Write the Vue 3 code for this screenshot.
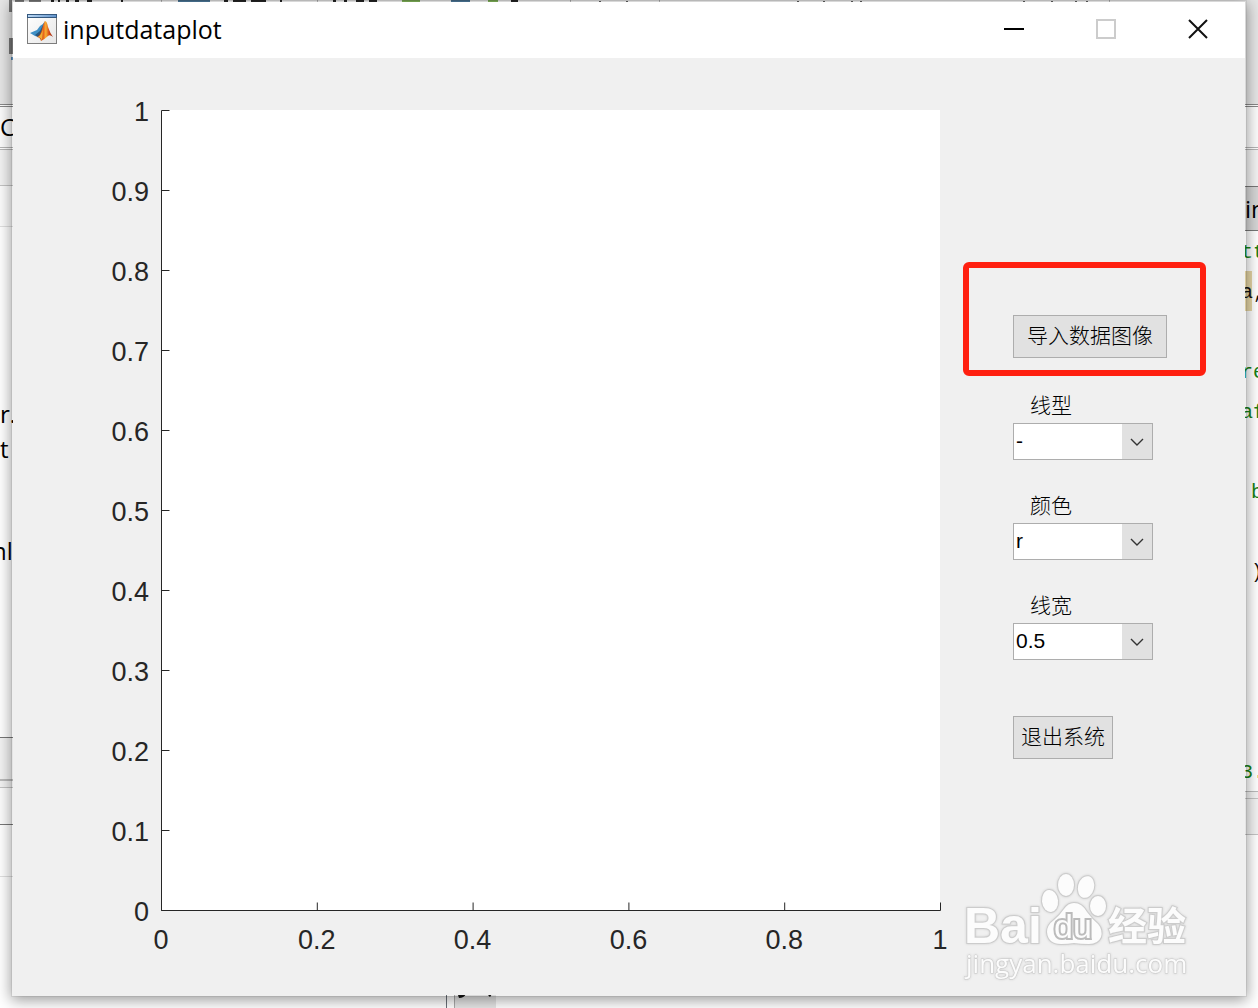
<script setup>
import { ref } from 'vue'

const lineStyle = ref('-')
const lineColor = ref('r')
const lineWidth = ref('0.5')

const yTicks = [0, 10, 20, 30, 40, 50, 60, 70, 80, 90, 100]
const xTicks = [0, 20, 40, 60, 80, 100]

// Slices of the editor that stay visible on either side of the dialog
const leftRows = [
  { h: 104, kind: 'ribbon' },
  { h: 3, kind: 'double' },
  { h: 40, kind: 'pale', text: 'C', tone: 'ui' },
  { h: 3, kind: 'double soft' },
  { h: 36, kind: 'tint line' },
  { h: 41, kind: 'pale line faint' },
  { h: 170, kind: 'paper' },
  { h: 34, kind: 'paper', text: 'r.', tone: 'ui' },
  { h: 36, kind: 'paper', text: 't', tone: 'ui' },
  { h: 66, kind: 'paper' },
  { h: 36, kind: 'paper', text: 'nl', tone: 'ui shifted' },
  { h: 169, kind: 'paper line strong' },
  { h: 41, kind: 'tint' },
  { h: 2, kind: 'bar' },
  { h: 7, kind: 'tint line' },
  { h: 37, kind: 'pale line strong' },
  { h: 52, kind: 'paper line faint' },
  { h: 131, kind: 'paper' }
]
const rightRows = [
  { h: 104, kind: 'ribbon' },
  { h: 3, kind: 'double' },
  { h: 40, kind: 'pale' },
  { h: 3, kind: 'double soft' },
  { h: 37, kind: 'tint line strong' },
  { h: 44, kind: 'tab line strong', text: 'in', tone: 'ui' },
  { h: 40, kind: 'paper', text: 'tt', tone: 'code comment' },
  { h: 40, kind: 'paper marked', text: 'a,', tone: 'code' },
  { h: 40, kind: 'paper' },
  { h: 40, kind: 'paper', text: 're', tone: 'code comment' },
  { h: 40, kind: 'paper', text: 'af', tone: 'code comment' },
  { h: 40, kind: 'paper' },
  { h: 40, kind: 'paper', text: 'b', tone: 'code comment inset' },
  { h: 40, kind: 'paper' },
  { h: 40, kind: 'paper', text: ')', tone: 'code inset' },
  { h: 160, kind: 'paper' },
  { h: 40, kind: 'paper', text: '3.', tone: 'code comment' },
  { h: 1, kind: 'bar' },
  { h: 7, kind: 'tint line' },
  { h: 36, kind: 'tint line' },
  { h: 173, kind: 'paper' }
]
</script>

<template>
  <div class="desktop">
    <div class="backdrop" aria-hidden="true">
      <div class="strip">
        <div v-for="(row, i) in leftRows" :key="i" class="row" :class="row.kind" :style="{ height: row.h + 'px' }">
          <span v-if="row.text" :class="row.tone">{{ row.text }}</span>
        </div>
      </div>
      <div class="behind">
        <svg class="ribbon-icons" width="1100" height="60">
          <g fill="#777">
            <path d="M-4 0h3v12h-3zM-4 38h4v16h-4zM2 0h9v2H2zM16 0h12v2H16z" />
          </g>
          <path d="M-2 57h3v3h-3z" fill="#5d8cb5" />
          <path d="M38 0h3v2h-3zM45 0h2v2h-2zM53 0h3v2h-3zM62 0h4v2h-4zM74 0h5v2h-5zM108 0h2v2h-2zM211 0h4v2h-4zM220 0h13v2h-13zM238 0h15v2h-15zM267 0h2v2h-2zM320 0h3v2h-3zM331 0h3v2h-3zM343 0h8v2h-8zM356 0h8v2h-8zM498 0h7v2h-7z" fill="#222" />
          <path d="M165 0h32v2h-32zM438 0h19v2h-19z" fill="#48708f" />
          <path d="M389 0h18v2h-18zM475 0h10v2h-10z" fill="#77a652" />
          <path d="M148 0h1v2h-1zM304 0h1v2h-1zM557 0h1v2h-1zM646 0h1v2h-1zM1096 0h1v2h-1z" fill="#aaa" />
          <path d="M586 1h2v1h-2zM613 1h2v1h-2zM784 1h2v1h-2zM810 1h2v1h-2zM838 1h2v1h-2zM847 1h2v1h-2zM1010 1h2v1h-2zM1038 1h2v1h-2zM1062 1h2v1h-2zM1073 1h2v1h-2z" fill="#555" />
        </svg>
        <svg class="tool-icon" width="50" height="14">
          <path d="M8 0h42v14H8z" fill="#e6e6e6" />
          <path d="M0 0h1v14H0z" fill="#6a7078" />
          <path d="M8 0h1v14H8z" fill="#aaa" />
          <path d="M12 1q5-1 8-1-2 4-7 4zM41 0h5l-2 3z" fill="#111" />
        </svg>
      </div>
      <div class="strip">
        <div v-for="(row, i) in rightRows" :key="i" class="row" :class="row.kind" :style="{ height: row.h + 'px' }">
          <span v-if="row.text" :class="row.tone">{{ row.text }}</span>
        </div>
      </div>
    </div>

    <main class="window">
      <header class="titlebar">
        <svg class="app-icon" viewBox="0 0 31 31" width="31" height="31">
          <defs>
            <linearGradient id="bar" x1="0" x2="1"><stop offset="0" stop-color="#b9d6f2" /><stop offset="1" stop-color="#6495cc" /></linearGradient>
            <linearGradient id="face" x1="0" y1="0" x2="1" y2="1"><stop offset="0" stop-color="#fff" /><stop offset="1" stop-color="#e6e6e6" /></linearGradient>
            <linearGradient id="peak" x1="0" x2="1"><stop offset="0" stop-color="#8c2414" /><stop offset=".4" stop-color="#e8641c" /><stop offset=".55" stop-color="#f7b035" /><stop offset=".75" stop-color="#d84a16" /><stop offset="1" stop-color="#8c2010" /></linearGradient>
          </defs>
          <rect x=".5" y=".5" width="29" height="29" fill="url(#face)" stroke="#7d7d7d" />
          <path d="M0 0h30v4H0z" fill="#34587f" />
          <path d="M1 1h28v2H1z" fill="url(#bar)" />
          <path d="M3 19l7-3 3-4q3-1 5-5l-3 10-4 6-3-1z" fill="#3f8fc5" />
          <path d="M8 21l5-4 4-8-2 10-4 4z" fill="#29577c" />
          <path d="M18 7q2 0 3 6 2 6 5 10-3-3-5-1-3 3-7 5-1-4-4-4 4-3 5-8 2-7 3-8z" fill="url(#peak)" />
          <path d="M10 23q4-1 6-8l-1 12q-1-4-5-4z" fill="#f2ac35" />
        </svg>
        <h1>inputdataplot</h1>
        <div class="controls">
          <button type="button" aria-label="Minimize"><svg width="20" height="20"><path d="M0 10h20" stroke="#000" stroke-width="2" /></svg></button>
          <button type="button" aria-label="Maximize" disabled><svg width="20" height="20"><path d="M1 1h18v18H1z" fill="none" stroke="#ccc" stroke-width="2" /></svg></button>
          <button type="button" aria-label="Close"><svg width="20" height="20"><path d="M1 1l18 18M19 1L1 19" stroke="#111" stroke-width="2" /></svg></button>
        </div>
      </header>

      <div class="content">
        <svg class="axes" role="img" aria-label="Empty axes">
          <rect width="100%" height="100%" fill="#fff" />
          <g class="rules" transform="translate(.5 .5)">
            <line x1="0" y1="0" x2="0" y2="100%" />
            <line x1="0" y1="100%" x2="100%" y2="100%" />
            <line v-for="t in yTicks" :key="'y' + t" x1="0" x2="8" :y1="100 - t + '%'" :y2="100 - t + '%'" />
            <svg v-for="t in xTicks" :key="'x' + t" :x="t + '%'" y="100%" overflow="visible"><line x1="0" x2="0" y1="-8" y2="0" /></svg>
          </g>
          <text v-for="t in yTicks" :key="'yl' + t" x="-12" :y="100 - t + '%'" dy="11" text-anchor="end">{{ t / 100 }}</text>
          <text v-for="t in xTicks" :key="'xl' + t" :x="t + '%'" y="100%" dy="39" text-anchor="middle">{{ t / 100 }}</text>
        </svg>

        <form class="panel" @submit.prevent>
          <div class="import">
            <button type="button" class="push wide">导入数据图像</button>
            <span class="highlight"></span>
          </div>
          <div class="fields">
            <div class="field">
              <label for="style">线型</label>
              <div class="combo">
                <select id="style" v-model="lineStyle"><option>-</option><option>--</option><option>:</option><option>-.</option></select>
                <svg width="14" height="8"><path d="M1 1l6 6 6-6" /></svg>
              </div>
            </div>
            <div class="field">
              <label for="color">颜色</label>
              <div class="combo">
                <select id="color" v-model="lineColor"><option>r</option><option>g</option><option>b</option><option>k</option></select>
                <svg width="14" height="8"><path d="M1 1l6 6 6-6" /></svg>
              </div>
            </div>
            <div class="field">
              <label for="width">线宽</label>
              <div class="combo">
                <select id="width" v-model="lineWidth"><option>0.5</option><option>1</option><option>1.5</option><option>2</option></select>
                <svg width="14" height="8"><path d="M1 1l6 6 6-6" /></svg>
              </div>
            </div>
          </div>
          <button type="button" class="push">退出系统</button>
        </form>
      </div>

      <svg class="watermark" width="228" height="112" role="img" aria-label="Baidu">
        <g class="mark">
          <text class="latin" x="0" y="70">Bai</text>
          <ellipse cx="86" cy="28" rx="8" ry="11" transform="rotate(-6 86 28)" />
          <ellipse cx="102" cy="12" rx="8" ry="11" />
          <ellipse cx="122" cy="14" rx="8" ry="11" transform="rotate(14 122 14)" />
          <ellipse cx="134" cy="33" rx="8" ry="10" />
          <path d="M110 30q8 0 13 9 5 7 11 12 5 6 3 13-3 7-12 7-8 0-15-1-6 1-13 1-13 0-14-12 0-7 7-12 6-5 10-11 4-6 10-6z" />
          <text class="paw" x="90" y="65">du</text>
          <text class="hanzi" x="144" y="67">经验</text>
        </g>
        <text class="url" x="2" y="100">jingyan.baidu.com</text>
      </svg>
    </main>
  </div>
</template>

<style>
body {
  margin: 0;
}
</style>

<style scoped>
.desktop {
  position: relative;
  display: flex;
  flex-direction: column;
  box-sizing: border-box;
  min-height: 100vh;
  padding: 0 11px 11px;
  overflow: hidden;
  background: #fff;
}
.backdrop {
  position: absolute;
  inset: 0;
  display: flex;
  overflow: hidden;
}
.strip {
  flex: none;
  width: 13px;
  overflow: hidden;
}
.behind {
  position: relative;
  flex: 1;
  display: flex;
  flex-direction: column;
  justify-content: space-between;
  background: linear-gradient(#e6e6e6 104px, #fff 104px);
}
.ribbon-icons {
  overflow: visible;
}
.tool-icon {
  margin-left: 433px;
}
.row {
  box-sizing: border-box;
  display: flex;
  align-items: center;
  white-space: nowrap;
}
.ribbon { background: #e6e6e6; }
.paper { background: #fff; }
.pale { background: #fcfcfc; }
.tint { background: #f3f3f3; }
.tab { background: #d6d6d6; }
.bar { background: #bbb; }
.double {
  border: solid #888;
  border-width: 1px 0;
  background: #fff;
}
.double.soft { border-color: #b5b5b5; }
.line { border-bottom: 1px solid #c4c4c4; }
.line.faint { border-color: #e0e0e0; }
.line.strong { border-color: #777; }
.marked { background: linear-gradient(90deg, #e6d6a6 7px, #fff 7px); }
.ui {
  font: 24px/32px "Open Sans", "Noto Sans", sans-serif;
  color: #000;
}
.shifted { margin-left: -8px; }
.code {
  padding-top: 4px;
  font: 20px/36px "Liberation Mono", monospace;
  margin-left: -4px;
  color: #111;
}
.comment { color: #168016; }
.inset { margin-left: 6px; }

.window {
  position: relative;
  flex: 1;
  display: flex;
  flex-direction: column;
  border: 2px solid rgba(0, 0, 0, 0.06);
  background: #f0f0f0;
  background-clip: padding-box;
  box-shadow: 0 3px 14px rgba(0, 0, 0, 0.4);
}
.titlebar {
  display: flex;
  align-items: center;
  box-sizing: border-box;
  height: 56px;
  padding: 0 1px 2px 14px;
  background: #fff;
}
.app-icon { margin-right: 5px; }
h1 {
  flex: 1;
  margin: 0;
  font: 25px/32px "Open Sans", "Noto Sans", sans-serif;
  color: #000;
}
.controls { display: flex; }
.controls button {
  display: flex;
  align-items: center;
  justify-content: center;
  width: 92px;
  height: 54px;
  padding: 0;
  border: 0;
  background: none;
}
.content {
  flex: 1;
  display: flex;
  padding: 52px 0 85px 148px;
}
.axes {
  flex: 1;
  min-width: 0;
  min-height: 400px;
  overflow: visible;
}
.rules line {
  stroke: #262626;
  stroke-width: 1px;
}
.axes text {
  font: 27px "Liberation Sans", Arial, sans-serif;
  fill: #262626;
}
.panel {
  display: flex;
  flex-direction: column;
  align-items: flex-start;
  box-sizing: border-box;
  width: 305px;
  padding: 205px 0 0 73px;
}
.push {
  box-sizing: border-box;
  height: 43px;
  padding: 0 7px 6px;
  border: 1px solid #adadad;
  background: #e1e1e1;
  font: 300 21px/30px "Noto Sans CJK SC", sans-serif;
  color: #000;
}
.push.wide { padding: 0 13px 6px; }
.import {
  position: relative;
  display: flex;
  margin-bottom: 34px;
}
.highlight {
  position: absolute;
  inset: -53px -39px -18px -50px;
  border: 6px solid #ff2010;
  border-radius: 6px;
  pointer-events: none;
}
.fields {
  display: flex;
  flex-direction: column;
  gap: 32px;
  margin-bottom: 56px;
}
.field {
  display: flex;
  flex-direction: column;
  gap: 7px;
}
.field label {
  padding-left: 17px;
  font: 300 21px/24px "Noto Sans CJK SC", sans-serif;
  color: #000;
}
.combo {
  position: relative;
  width: 140px;
}
select {
  display: block;
  box-sizing: border-box;
  width: 100%;
  height: 37px;
  padding: 0 32px 2px 2px;
  border: 1px solid #adadad;
  border-radius: 0;
  appearance: none;
  background: linear-gradient(90deg, transparent 108px, #e1e1e1 108px) #fff;
  font: 21px/32px "Liberation Sans", Arial, sans-serif;
  color: #000;
}
.combo svg {
  position: absolute;
  top: 15px;
  right: 9px;
  pointer-events: none;
}
.combo path {
  fill: none;
  stroke: #333;
  stroke-width: 1.4;
}
.watermark {
  position: absolute;
  right: 53px;
  bottom: 10px;
  overflow: visible;
  fill: #fcfcfc;
  stroke: #ccc;
  stroke-width: 2px;
  paint-order: stroke;
  filter: drop-shadow(0 0 1px #ccc);
  pointer-events: none;
}
.latin { font: bold 50px "Liberation Sans", Arial, sans-serif; }
.paw {
  font: 34px "Liberation Sans", Arial, sans-serif;
  stroke: #bbb;
  stroke-width: 4px;
}
.hanzi { font: bold 39px "Noto Sans CJK SC", sans-serif; }
.url {
  font: 26px "Open Sans", "Noto Sans", sans-serif;
  stroke-width: 1px;
}
</style>
